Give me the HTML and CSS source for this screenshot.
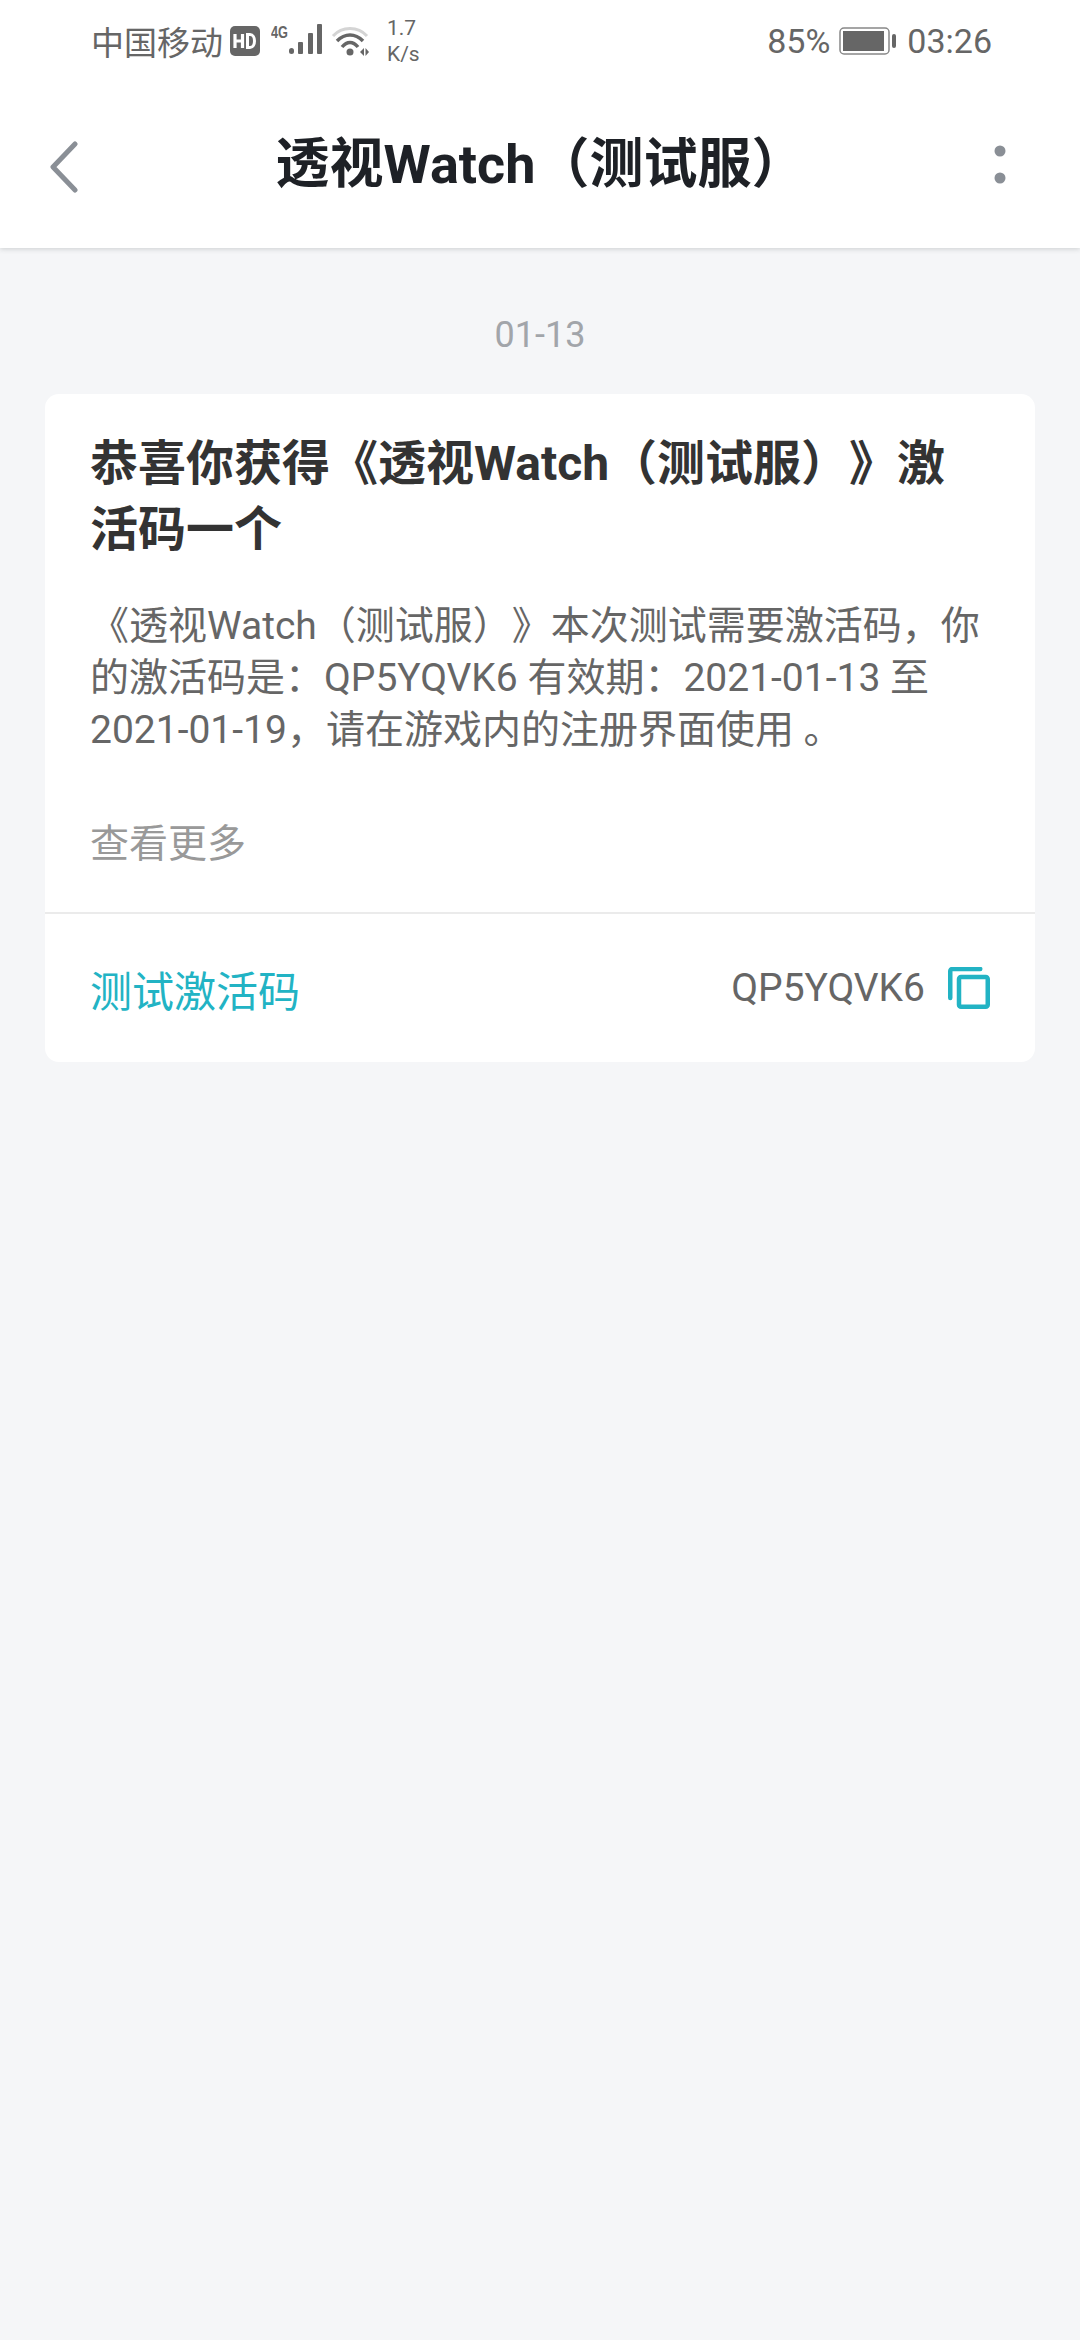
FILE: index.html
```html
<!DOCTYPE html>
<html lang="zh">
<head>
<meta charset="utf-8">
<title>透视Watch（测试服）</title>
<link rel="stylesheet" href="styles.css">
</head>
<body>
<div class="top">
  <div class="status">
    <div class="status-left">
      <span class="carrier">中国移动</span>
      <svg class="i-hd" width="30" height="30" viewBox="0 0 30 30"><rect x="0" y="0" width="30" height="30" rx="5" fill="#666"/><path d="M5 8v14M12.500 8v14M5 15h7.500" stroke="#fff" stroke-width="3.200" fill="none"/><path d="M17.500 8.500v13h2.500c6 0 6-13 0-13z" stroke="#fff" stroke-width="3" fill="none"/></svg>
      <svg class="i-signal" width="52" height="32" viewBox="0 0 52 32"><text x="0" y="14" class="t-4g" textLength="17" lengthAdjust="spacingAndGlyphs">4G</text><rect x="18" y="24" width="5" height="6" rx="2.500" fill="#666"/><rect x="27" y="18" width="5" height="12" rx="1" fill="#666"/><rect x="37" y="9" width="5" height="21" rx="1" fill="#666"/><rect x="46" y="0" width="5" height="30" rx="1" fill="#666"/></svg>
      <svg class="i-wifi" width="38" height="30" viewBox="0 0 38 30"><path d="M2 10C11 0 27 0 36 10" stroke="#d4d4d4" stroke-width="3" fill="none"/><path d="M6 15C14 7 24 7 32 15" stroke="#666" stroke-width="3.500" fill="none"/><path d="M11 21C16 15 22 15 27 21" stroke="#666" stroke-width="3.500" fill="none"/><circle cx="19" cy="26" r="3.500" fill="#666"/><path d="M29 26l4-4v8zM34.500 22l3.500 4-3.500 4z" fill="#666"/></svg>
      <span class="speed"><span>1.7</span><span>K/s</span></span>
    </div>
    <div class="status-right">
      <span>85%</span>
      <svg class="i-batt" width="58" height="28" viewBox="0 0 58 28"><rect x="1" y="1" width="49" height="26" rx="4" fill="none" stroke="#888" stroke-width="1.500"/><rect x="4" y="4" width="41" height="20" fill="#666"/><rect x="53" y="7" width="4" height="14" rx="2" fill="#666"/></svg>
      <span>03:26</span>
    </div>
  </div>
  <header class="nav">
    <svg class="i-back" width="30" height="52" viewBox="0 0 30 52"><path d="M26 3L4 26l22 23" fill="none" stroke="#8a8f96" stroke-width="5" stroke-linecap="round" stroke-linejoin="round"/></svg>
    <h1 class="nav-title">透视Watch（测试服）</h1>
    <svg class="i-more" width="12" height="40" viewBox="0 0 12 40"><circle cx="6" cy="6" r="5.500" fill="#8a8f96"/><circle cx="6" cy="33" r="5.500" fill="#8a8f96"/></svg>
  </header>
</div>
<main class="feed">
  <div class="date">01-13</div>
  <section class="card">
    <div class="card-body">
      <h2 class="card-title">恭喜你获得《透视Watch（测试服）》激活码一个</h2>
      <p class="card-text">《透视Watch（测试服）》本次测试需要激活码，你的激活码是：QP5YQVK6 有效期：2021-01-13 至 2021-01-19，请在游戏内的注册界面使用 。</p>
      <div class="more">查看更多</div>
    </div>
    <div class="card-foot">
      <span class="code-label">测试激活码</span>
      <div class="code-wrap">
        <span class="code">QP5YQVK6</span>
        <svg class="i-copy" width="42" height="42" viewBox="0 0 42 42"><path d="M2.250 31V4a2 2 0 0 1 2-2h28" fill="none" stroke="#22b3c4" stroke-width="4.500" stroke-linecap="round"/><rect x="11" y="10" width="28.750" height="29.750" rx="2" fill="none" stroke="#22b3c4" stroke-width="4.500"/></svg>
      </div>
    </div>
  </section>
</main>
</body>
</html>
```
FILE: styles.css
```css
* { box-sizing: border-box; }
html, body { margin: 0; padding: 0; }
body {
  width: 1080px;
  height: 2340px;
  background: #f5f6f8;
  font-family: Roboto, "Noto Sans CJK SC", sans-serif;
  text-spacing-trim: space-all;
  overflow: hidden;
}
.top {
  background: #fff;
  height: 248px;
  box-shadow: 0 1px 5px rgba(60, 70, 70, .22);
  position: relative;
}
.status {
  height: 82px;
  padding: 0 88px 0 91px;
  display: flex;
  justify-content: space-between;
  align-items: center;
  color: #666;
  font-size: 34px;
}
.status-left, .status-right { display: flex; align-items: center; }
.carrier { font-size: 33px; }
.i-hd { margin-left: 7px; }
.i-signal { margin-left: 11px; margin-top: -2px; }
.t-4g { font-family: "Liberation Sans", sans-serif; font-size: 17px; font-weight: 700; fill: #666; }
.i-wifi { margin-left: 8px; }
.speed {
  display: flex;
  flex-direction: column;
  align-items: flex-start;
  font-size: 21px;
  line-height: 26px;
  margin-left: 18px;
}
.i-batt { margin: 0 10px 0 9px; }
.nav {
  height: 166px;
  padding: 0 74px 0 49px;
  display: flex;
  align-items: flex-start;
  justify-content: space-between;
}
.i-back { margin-top: 59px; }
.i-more { margin-top: 63px; }
.nav-title {
  margin: 53px 0 0 8px;
  font-size: 54px;
  line-height: 60px;
  font-weight: 700;
  color: #1e2126;
  white-space: nowrap;
}
.feed { padding: 0 45px; }
.date {
  padding-top: 67px;
  text-align: center;
  font-size: 36px;
  line-height: 40px;
  color: #a2a5aa;
  margin-bottom: 39px;
}
.card {
  background: #fff;
  border-radius: 14px;
  height: 668px;
  display: flex;
  flex-direction: column;
}
.card-body {
  height: 520px;
  padding: 37px 45px 0;
  border-bottom: 2px solid #ebebeb;
}
.card-title {
  margin: 0;
  font-size: 48px;
  line-height: 66px;
  font-weight: 700;
  color: #333;
}
.card-text {
  margin: 37px 0 0;
  font-size: 39px;
  line-height: 52px;
  color: #666;
}
.more {
  margin-top: 62px;
  font-size: 39px;
  line-height: 52px;
  color: #999;
}
.card-foot {
  flex: 1;
  padding: 0 45px;
  display: flex;
  align-items: center;
  justify-content: space-between;
}
.code-label { font-size: 42px; color: #22b3c4; }
.code-wrap { display: flex; align-items: center; gap: 23px; }
.code { font-size: 39px; color: #666; }
```
